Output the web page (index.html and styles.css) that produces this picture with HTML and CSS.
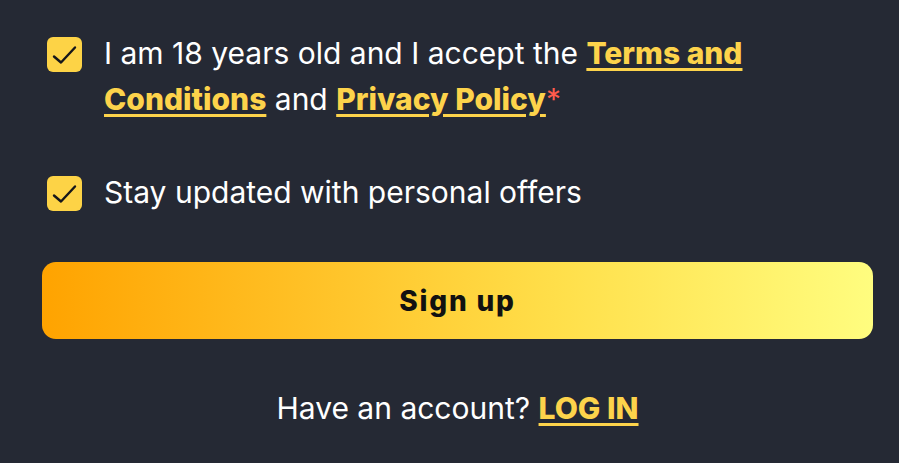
FILE: index.html
```html
<!DOCTYPE html>
<html lang="en">
<head>
<meta charset="utf-8">
<link rel="stylesheet" href="styles.css">
</head>
<body>
<main class="form">
  <label class="check-row first">
    <span class="box"><svg viewBox="0 0 35 35" width="35" height="35"><path d="M7 19.5 L14 25.5 L28 10.5" fill="none" stroke="#15161a" stroke-width="2.4" stroke-linecap="round" stroke-linejoin="round"/></svg></span>
    <span class="label">I am 18 years old and I accept the <a href="#" class="link">Terms and Conditions</a> and <a href="#" class="link">Privacy Policy</a><span class="req">*</span></span>
  </label>
  <label class="check-row second">
    <span class="box"><svg viewBox="0 0 35 35" width="35" height="35"><path d="M7 19.5 L14 25.5 L28 10.5" fill="none" stroke="#15161a" stroke-width="2.4" stroke-linecap="round" stroke-linejoin="round"/></svg></span>
    <span class="label">Stay updated with personal offers</span>
  </label>
  <button class="signup">Sign up</button>
  <p class="login">Have an account? <a href="#" class="link">LOG IN</a></p>
</main>
</body>
</html>
```
FILE: styles.css
```css
html, body {
  margin: 0;
  padding: 0;
  background: #252934;
}
body {
  font-family: Inter, "Noto Sans", sans-serif;
  color: #ffffff;
}
.form {
  width: 831px;
  padding: 30px 0 0 42px;
  display: flex;
  flex-direction: column;
}
.check-row {
  display: flex;
  align-items: flex-start;
  gap: 22px;
  padding-left: 5px;
  font-size: 30px;
  line-height: 46px;
}
.check-row .box {
  flex: none;
  width: 35px;
  height: 35px;
  margin-top: 7px;
  border-radius: 6px;
  background: #fdd346;
  display: flex;
}
.check-row.second {
  margin-top: 47px;
}
.label {
  width: 680px;
}
.link {
  color: #fdd34b;
  font-weight: 800;
  text-decoration: underline;
  text-decoration-thickness: 3px;
  text-underline-offset: 4px;
}
.req {
  color: #ff5b4c;
}
.signup {
  margin-top: 47px;
  height: 77px;
  width: 831px;
  border: none;
  border-radius: 14px;
  background: linear-gradient(90deg, #ffa300 0%, #ffc42a 35%, #ffdf4a 62%, #fffd7f 100%);
  font-family: Inter, "Noto Sans", sans-serif;
  font-size: 28px;
  font-weight: 800;
  color: #111;
  letter-spacing: 1.8px;
}
.login {
  margin: 51px 0 0;
  text-align: center;
  font-size: 30px;
  line-height: 36px;
}
```
